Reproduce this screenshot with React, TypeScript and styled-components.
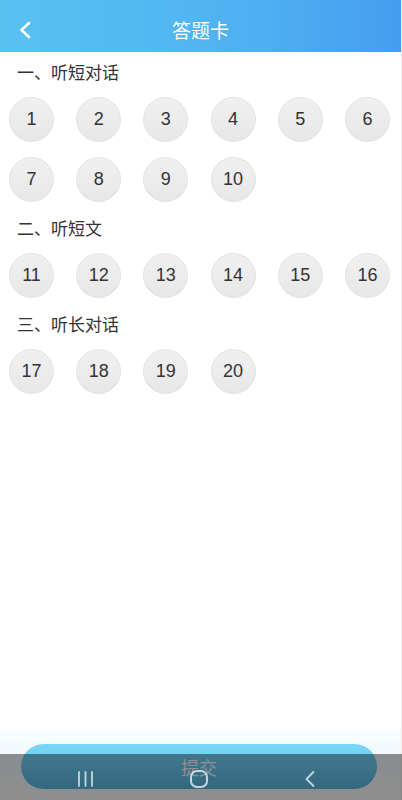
import * as React from "react";
import styled, { createGlobalStyle } from "styled-components";

const GlobalStyle = createGlobalStyle`
  html, body {
    margin: 0;
    padding: 0;
    background: #ececec;
  }
  body {
    font-family: "Liberation Sans", "Noto Sans CJK SC", sans-serif;
  }
`;

interface ISection {
  title: string;
  from: number;
  to: number;
}

const sections: ISection[] = [
  { title: "一、听短对话", from: 1, to: 10 },
  { title: "二、听短文", from: 11, to: 16 },
  { title: "三、听长对话", from: 17, to: 20 },
];

const range = (from: number, to: number) =>
  Array.from({ length: to - from + 1 }, (_, i) => from + i);

const App = () => {
  return (
    <Page>
      <GlobalStyle />
      <Header>
        <BackButton>
          <svg width="14" height="18" viewBox="0 0 14 18">
            <path
              d="M11 2 L3.5 9 L11 16"
              fill="none"
              stroke="#fff"
              strokeWidth="2.6"
              strokeLinecap="round"
              strokeLinejoin="round"
            />
          </svg>
        </BackButton>
        <Title>答题卡</Title>
      </Header>
      <Content>
        {sections.map(s => (
          <Section key={s.title}>
            <SectionTitle>{s.title}</SectionTitle>
            <Grid>
              {range(s.from, s.to).map(n => (
                <NumberBall key={n}>{n}</NumberBall>
              ))}
            </Grid>
          </Section>
        ))}
      </Content>
      <Footer>
        <SubmitButton>提交</SubmitButton>
      </Footer>
      <NavBar>
        <NavItem>
          <svg width="18" height="18" viewBox="0 0 18 18">
            <path
              d="M2 2 V16 M8.5 2 V16 M15 2 V16"
              stroke="currentColor"
              strokeWidth="1.8"
              strokeLinecap="round"
            />
          </svg>
        </NavItem>
        <NavItem>
          <svg width="20" height="20" viewBox="0 0 20 20">
            <rect
              x="2"
              y="2"
              width="16"
              height="16"
              rx="6"
              fill="none"
              stroke="currentColor"
              strokeWidth="2"
            />
          </svg>
        </NavItem>
        <NavItem>
          <svg width="14" height="18" viewBox="0 0 14 18">
            <path
              d="M10.5 2 L3.5 9 L10.5 16"
              fill="none"
              stroke="currentColor"
              strokeWidth="1.8"
              strokeLinecap="round"
              strokeLinejoin="round"
            />
          </svg>
        </NavItem>
      </NavBar>
    </Page>
  );
};

export default App;

const Page = styled.div`
  position: relative;
  width: 401px;
  min-height: 800px;
  background: #ffffff;
`;

const Header = styled.header`
  position: relative;
  height: 52px;
  box-sizing: border-box;
  padding-top: 7px;
  display: flex;
  align-items: center;
  justify-content: center;
  background: linear-gradient(90deg, #57c2f2 0%, #4fb2f1 60%, #469df0 100%);
`;

const BackButton = styled.div`
  position: absolute;
  left: 18px;
  top: 21px;
  width: 16px;
  height: 18px;
  display: flex;
  align-items: center;
`;

const Title = styled.h1`
  margin: 0;
  font-family: "Noto Sans CJK SC", sans-serif;
  font-size: 19px;
  font-weight: 400;
  color: #ffffff;
  line-height: 24px;
`;

const Content = styled.main`
  padding: 9px 10px 0 9px;
`;

const Section = styled.section`
  margin-bottom: 15px;
`;

const SectionTitle = styled.h2`
  margin: 0 0 14px 8px;
  font-family: "Noto Sans CJK SC", sans-serif;
  font-size: 17px;
  font-weight: 400;
  line-height: 22px;
  color: #333333;
`;

const Grid = styled.div`
  display: grid;
  grid-template-columns: repeat(6, 45px);
  column-gap: 22.2px;
  row-gap: 15px;
`;

const NumberBall = styled.div`
  width: 45px;
  height: 45px;
  box-sizing: border-box;
  border-radius: 50%;
  border: 1px solid #e2e2e2;
  background: linear-gradient(180deg, #f0f0f0 0%, #ebebeb 60%, #e7e7e7 100%);
  display: flex;
  align-items: center;
  justify-content: center;
  font-family: "Liberation Sans", Arial, sans-serif;
  font-size: 18px;
  color: #333333;
`;

const Footer = styled.footer`
  position: fixed;
  left: 0;
  bottom: 0;
  width: 401px;
  height: 76px;
  box-sizing: border-box;
  padding: 20px 24px 11px 21px;
  background: linear-gradient(
    180deg,
    rgba(255, 255, 255, 0) 0%,
    rgba(240, 250, 255, 0.9) 30%,
    #ffffff 100%
  );
`;

const SubmitButton = styled.button`
  width: 100%;
  height: 45px;
  border: none;
  border-radius: 23px;
  background: linear-gradient(180deg, #7ad6f7 0%, #6ccdf2 50%, #5bb9e6 100%);
  color: #ffffff;
  font-family: "Noto Sans CJK SC", sans-serif;
  font-size: 18px;
  padding: 0;
`;

const NavBar = styled.nav`
  position: fixed;
  left: 0;
  bottom: 0;
  width: 402px;
  height: 46px;
  display: flex;
  align-items: center;
  gap: 94px;
  padding: 4px 0 0 77px;
  box-sizing: border-box;
  background: rgba(0, 0, 0, 0.44);
  color: rgba(230, 240, 245, 0.8);
`;

const NavItem = styled.div`
  display: flex;
  align-items: center;
`;
